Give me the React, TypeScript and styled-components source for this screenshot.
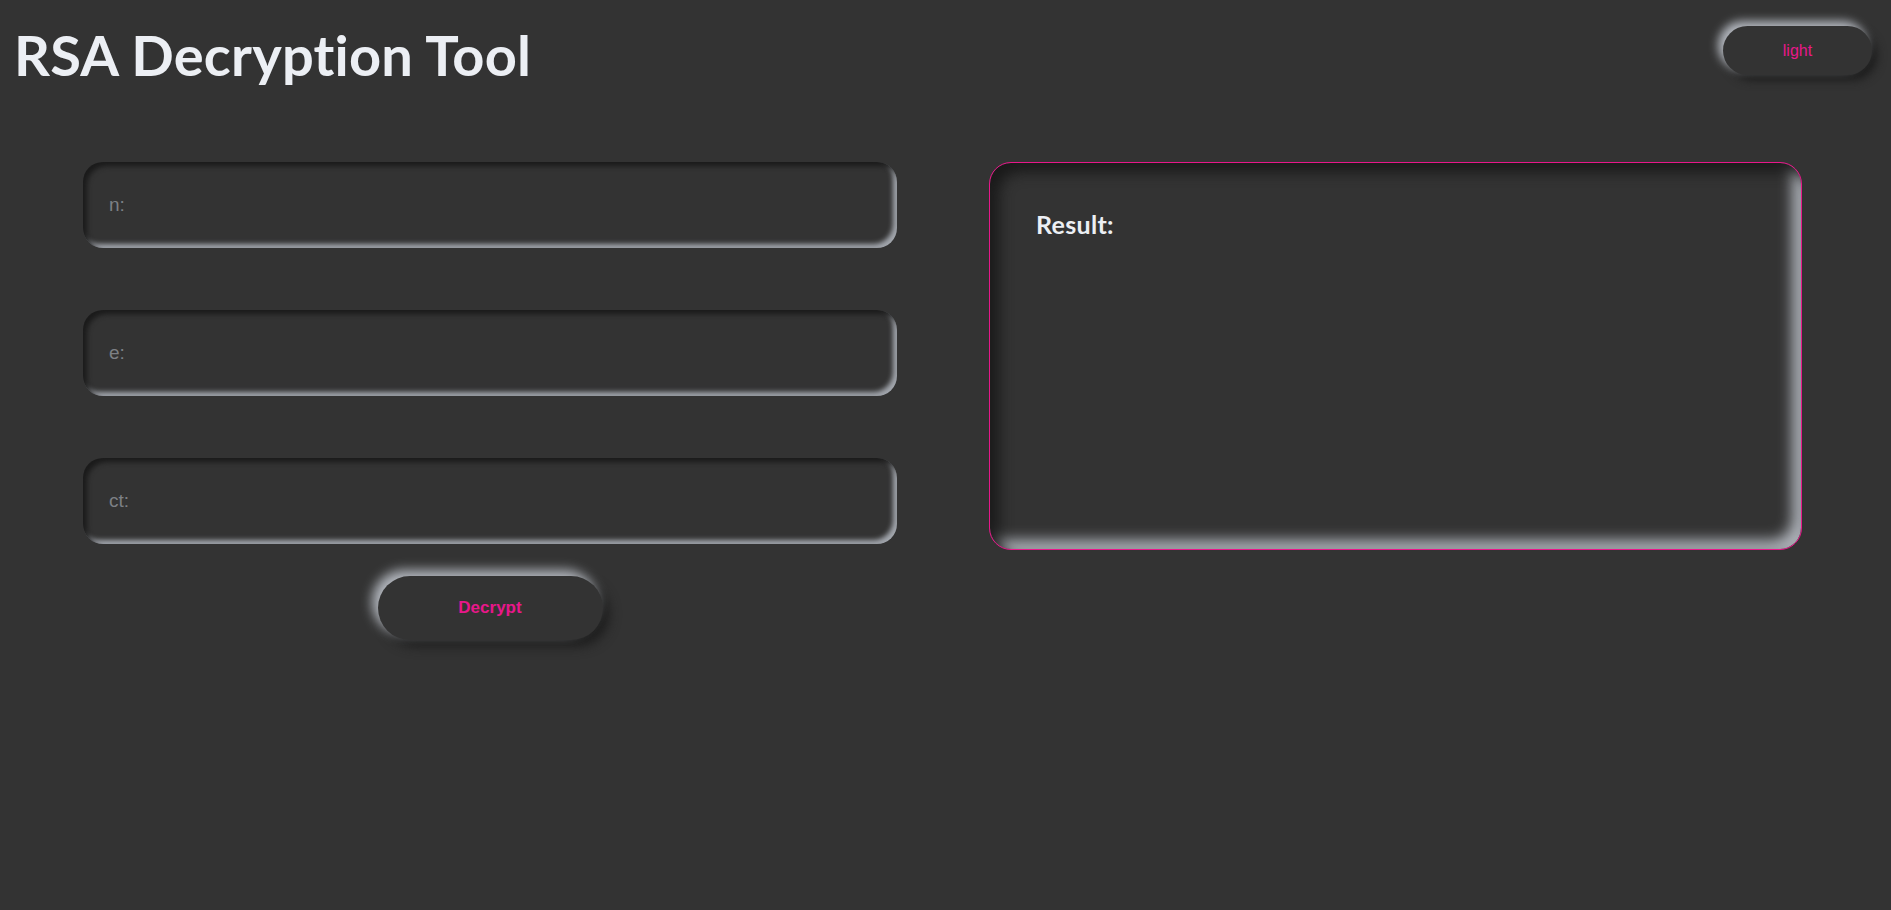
import React from "react";
import styled, { createGlobalStyle } from "styled-components";

const Global = createGlobalStyle`
  html, body { margin: 0; padding: 0; background: #333333; }
  body { font-family: "Lato", "Open Sans", sans-serif; min-height: 910px; }
  * { box-sizing: border-box; }
`;

const Page = styled.div`
  min-height: 910px;
  background: #333333;
  display: flex;
  flex-direction: column;
`;

const Header = styled.header`
  display: flex;
  justify-content: space-between;
  align-items: flex-start;
  padding: 0 19px 0 14px;
`;

const Title = styled.h1`
  margin: 0;
  padding-top: 22px;
  font-family: "Lato", "Open Sans", sans-serif;
  font-weight: 700;
  font-size: 56px;
  line-height: 66px;
  color: #eceff4;
  letter-spacing: 0.2px;
`;

const Toggle = styled.button`
  margin-top: 26px;
  width: 149px;
  height: 49px;
  border: none;
  border-radius: 25px;
  background: #333333;
  color: #e8178a;
  font-family: "Liberation Sans", Arial, sans-serif;
  font-size: 16px;
  box-shadow: -5px -5px 10px #b3b7be, 5px 5px 10px #1c1c1c;
  cursor: pointer;
`;

const Main = styled.main`
  display: grid;
  grid-template-columns: 814px 813px;
  column-gap: 92px;
  padding: 74px 0 0 83px;
  align-items: start;
`;

const Form = styled.div`
  display: flex;
  flex-direction: column;
  align-items: center;
`;

const Fields = styled.div`
  display: flex;
  flex-direction: column;
  gap: 62px;
  width: 100%;
`;

const Input = styled.input`
  width: 100%;
  height: 86px;
  border: none;
  border-radius: 20px;
  background: #333333;
  padding: 0 26px;
  font-family: "Liberation Sans", Arial, sans-serif;
  font-size: 19px;
  color: #dddddd;
  outline: none;
  box-shadow: inset 4px 4px 5px #1b1b1b, inset -4px -4px 5px #a3a7ae;
  &::placeholder { color: #7d8085; }
`;

const Decrypt = styled.button`
  margin-top: 32px;
  width: 225px;
  height: 64px;
  border: none;
  border-radius: 32px;
  background: #333333;
  color: #e8178a;
  font-family: "Liberation Sans", Arial, sans-serif;
  font-weight: 700;
  font-size: 17px;
  box-shadow: -6px -6px 12px #b3b7be, 6px 6px 12px #1c1c1c;
  cursor: pointer;
`;

const ResultBox = styled.section`
  height: 388px;
  border: 1px solid #e8178a;
  border-radius: 22px;
  background: #333333;
  padding: 46px 46px;
  box-shadow: inset 9px 9px 14px #1a1a1a, inset -9px -9px 14px #aeb2b9;
`;

const ResultTitle = styled.h3`
  margin: 0;
  font-family: "Lato", "Open Sans", sans-serif;
  font-weight: 700;
  font-size: 25px;
  letter-spacing: 0.3px;
  color: #eceff4;
`;

export default function App() {
  return (
    <Page>
      <Global />
      <Header>
        <Title>RSA Decryption Tool</Title>
        <Toggle>light</Toggle>
      </Header>
      <Main>
        <Form>
          <Fields>
            <Input placeholder="n:" />
            <Input placeholder="e:" />
            <Input placeholder="ct:" />
          </Fields>
          <Decrypt>Decrypt</Decrypt>
        </Form>
        <ResultBox>
          <ResultTitle>Result:</ResultTitle>
        </ResultBox>
      </Main>
    </Page>
  );
}
